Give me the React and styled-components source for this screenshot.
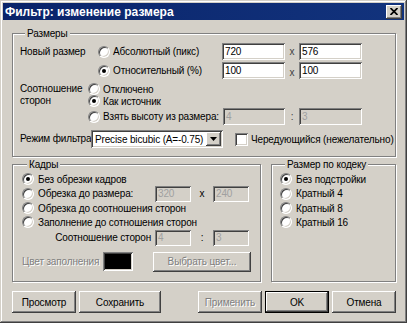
import styled, { createGlobalStyle, css } from 'styled-components';

const face = '#d4d0c8';

const GlobalStyle = createGlobalStyle`
  html, body { margin: 0; padding: 0; background: ${face}; }
  body {
    font-family: "Liberation Sans", Arial, sans-serif;
    font-size: 10px;
    letter-spacing: -0.15px;
    color: #000;
  }
  * { box-sizing: border-box; }
`;

const raised = css`
  background: ${face};
  box-shadow: inset -1px -1px #404040, inset 1px 1px #fff,
    inset -2px -2px #808080, inset 2px 2px ${face};
`;

const sunken = css`
  box-shadow: inset 1px 1px #808080, inset -1px -1px #fff,
    inset 2px 2px #404040, inset -2px -2px ${face};
`;

const disabledText = css`
  color: #808080;
  text-shadow: 1px 1px 0 #fff;
`;

const Window = styled.div`
  width: 407px;
  height: 323px;
  padding: 3px;
  background: ${face};
  box-shadow: inset -1px -1px #404040, inset 1px 1px ${face},
    inset -2px -2px #808080, inset 2px 2px #fff;
  display: flex;
  flex-direction: column;
`;

const TitleBar = styled.div`
  height: 17px;
  flex: none;
  display: flex;
  align-items: center;
  justify-content: space-between;
  padding: 0 2px 0 2px;
  background: linear-gradient(90deg, #0a246a, #12337d);
  color: #fff;
  font-weight: bold;
  font-size: 12px;
  letter-spacing: 0;
`;

const CloseButton = styled.div`
  ${raised};
  width: 16px;
  height: 14px;
  display: flex;
  align-items: center;
  justify-content: center;
`;

const Body = styled.div`
  padding: 7px 8px 0 9px;
  display: flex;
  flex-direction: column;
`;

const Group = styled.fieldset`
  margin: 0;
  padding: ${(p) => p.$pad};
  border: 1px solid #808080;
  box-shadow: inset 1px 1px #fff, 1px 1px #fff;
  min-width: 0;
  width: ${(p) => (p.$w ? `${p.$w}px` : 'auto')};
  display: flex;
  flex-direction: column;
`;

const Legend = styled.legend`
  padding: 0 2px;
  margin-left: 5px;
  line-height: 13px;
  background: ${face};
`;

const Section = styled.div`
  display: flex;
  margin-top: ${(p) => p.$mt || 0}px;
`;

const SideLabel = styled.div`
  width: ${(p) => p.$w}px;
  flex: none;
  line-height: ${(p) => p.$lh}px;
  white-space: nowrap;
`;

const Column = styled.div`
  display: flex;
  flex-direction: column;
`;

const Row = styled.div`
  display: flex;
  align-items: center;
  height: ${(p) => p.$h}px;
  margin-top: ${(p) => p.$mt || 0}px;
`;

const Option = styled.div`
  display: flex;
  align-items: center;
  gap: ${(p) => p.$gap || 3}px;
  width: ${(p) => (p.$w ? `${p.$w}px` : 'auto')};
  margin-left: ${(p) => p.$ml || 0}px;
  flex: none;
  white-space: nowrap;
`;

const RadioMark = styled.span`
  width: 12px;
  height: 12px;
  flex: none;
  border-radius: 50%;
  background: #fff;
  border: 1px solid;
  border-color: #808080 #fff #fff #808080;
  box-shadow: inset 1px 1px #404040, inset -1px -1px ${face};
  display: flex;
  align-items: center;
  justify-content: center;
  &::after {
    content: '';
    width: 4px;
    height: 4px;
    border-radius: 50%;
    background: ${(p) => (p.$checked ? '#000' : 'transparent')};
  }
`;

const CheckMark = styled.span`
  ${sunken};
  width: 13px;
  height: 13px;
  flex: none;
  background: #fff;
`;

const TextBox = styled.div`
  ${sunken};
  width: ${(p) => p.$w}px;
  height: ${(p) => p.$h || 17}px;
  flex: none;
  background: ${(p) => (p.$disabled ? face : '#fff')};
  color: ${(p) => (p.$disabled ? '#a0a0a0' : '#000')};
  padding: 0 3px;
  display: flex;
  align-items: center;
`;

const Sep = styled.div`
  width: ${(p) => p.$w}px;
  flex: none;
  text-align: center;
  color: ${(p) => (p.$disabled ? '#000' : '#404040')};
  padding-top: ${(p) => p.$pt || 0}px;
`;

const Select = styled.div`
  ${sunken};
  width: 132px;
  height: 18px;
  flex: none;
  background: #fff;
  padding: 2px;
  display: flex;
  align-items: center;
`;

const SelectText = styled.span`
  flex: 1;
  padding-left: 2px;
  white-space: nowrap;
`;

const DropButton = styled.div`
  ${raised};
  width: 15px;
  height: 14px;
  display: flex;
  align-items: center;
  justify-content: center;
`;

const Text = styled.span`
  white-space: nowrap;
  ${(p) => p.$disabled && disabledText};
`;

const RightLabel = styled.div`
  width: ${(p) => p.$w}px;
  flex: none;
  text-align: right;
  padding-right: 4px;
`;

const Swatch = styled.div`
  ${sunken};
  width: 30px;
  height: 19px;
  flex: none;
  background: #000;
  margin-right: 20px;
`;

const BottomRow = styled.div`
  display: flex;
  gap: 10px;
  margin-top: 1px;
`;

const ButtonBar = styled.div`
  display: flex;
  gap: 3px;
  margin-top: 9px;
`;

const Spacer = styled.div`
  flex: 1;
`;

const Button = styled.div`
  ${raised};
  width: ${(p) => p.$w}px;
  height: ${(p) => p.$h || 22}px;
  flex: none;
  display: flex;
  align-items: center;
  justify-content: center;
  white-space: nowrap;
  ${(p) => p.$disabled && disabledText};
  ${(p) =>
    p.$default &&
    css`
      border: 1px solid #000;
    `}
`;

function Radio({ checked, label, w, gap, disabled }) {
  return (
    <Option $w={w} $gap={gap}>
      <RadioMark $checked={checked} />
      <Text $disabled={disabled}>{label}</Text>
    </Option>
  );
}

export default function App() {
  return (
    <>
      <GlobalStyle />
      <Window>
        <TitleBar>
          <span>Фильтр: изменение размера</span>
          <CloseButton>
            <svg width="8" height="7" viewBox="0 0 8 7">
              <path d="M0.5 0 L7.5 7 M7.5 0 L0.5 7" stroke="#000" strokeWidth="1.7" />
            </svg>
          </CloseButton>
        </TitleBar>
        <Body>
          <Group $pad="2px 0 7px 7px">
            <Legend>Размеры</Legend>
            <Section>
              <SideLabel $w={78} $lh={19}>Новый размер</SideLabel>
              <Column>
                <Row $h={19}>
                  <Radio w={124} label="Абсолютный (пикс)" />
                  <TextBox $w={63}>720</TextBox>
                  <Sep $w={14}>x</Sep>
                  <TextBox $w={63}>576</TextBox>
                </Row>
                <Row $h={19}>
                  <Radio w={124} checked label="Относительный (%)" />
                  <TextBox $w={63}>100</TextBox>
                  <Sep $w={14} $pt={3}>x</Sep>
                  <TextBox $w={63}>100</TextBox>
                </Row>
              </Column>
            </Section>
            <Section $mt={3}>
              <SideLabel $w={68} $lh={12}>
                Соотношение
                <br />
                сторон
              </SideLabel>
              <Column>
                <Row $h={12}>
                  <Radio w={135} label="Отключено" />
                </Row>
                <Row $h={12}>
                  <Radio w={135} checked label="Как источник" />
                </Row>
                <Row $h={19}>
                  <Radio w={135} label="Взять высоту из размера:" />
                  <TextBox $w={62} $disabled>4</TextBox>
                  <Sep $w={14}>:</Sep>
                  <TextBox $w={63} $disabled>3</TextBox>
                </Row>
              </Column>
            </Section>
            <Row $h={20} $mt={3}>
              <SideLabel $w={71} $lh={20}>Режим фильтра</SideLabel>
              <Select>
                <SelectText>Precise bicubic (A=-0.75)</SelectText>
                <DropButton>
                  <svg width="7" height="4" viewBox="0 0 7 4">
                    <path d="M0 0 H7 L3.5 4 Z" fill="#000" />
                  </svg>
                </DropButton>
              </Select>
              <Option $gap={3} $ml={12}>
                <CheckMark />
                <Text>Чередующийся (нежелательно)</Text>
              </Option>
            </Row>
          </Group>

          <BottomRow>
            <Group $w={249} $pad="1px 0 9px 9px">
              <Legend>Кадры</Legend>
              <Row $h={14}>
                <Radio w={133} gap={4} checked label="Без обрезки кадров" />
              </Row>
              <Row $h={15}>
                <Radio w={133} gap={4} label="Обрезка до размера:" />
                <TextBox $w={36} $h={16} $disabled>320</TextBox>
                <Sep $w={22} $disabled>x</Sep>
                <TextBox $w={36} $h={16} $disabled>240</TextBox>
              </Row>
              <Row $h={14}>
                <Radio w={133} gap={4} label="Обрезка до соотношения сторон" />
              </Row>
              <Row $h={14}>
                <Radio w={133} gap={4} label="Заполнение до сотношения сторон" />
              </Row>
              <Row $h={17}>
                <RightLabel $w={133}>Соотношение сторон</RightLabel>
                <TextBox $w={36} $h={16} $disabled>4</TextBox>
                <Sep $w={22} $disabled>:</Sep>
                <TextBox $w={36} $h={16} $disabled>3</TextBox>
              </Row>
              <Row $h={21} $mt={5}>
                <SideLabel $w={81} $lh={21}>
                  <Text $disabled>Цвет заполнения</Text>
                </SideLabel>
                <Swatch />
                <Button $w={98} $h={20} $disabled>
                  Выбрать цвет...
                </Button>
              </Row>
            </Group>
            <Group $w={125} $pad="1px 0 9px 8px">
              <Legend>Размер по кодеку</Legend>
              <Row $h={14}>
                <Radio gap={4} checked label="Без подстройки" />
              </Row>
              <Row $h={15}>
                <Radio gap={4} label="Кратный 4" />
              </Row>
              <Row $h={14}>
                <Radio gap={4} label="Кратный 8" />
              </Row>
              <Row $h={14}>
                <Radio gap={4} label="Кратный 16" />
              </Row>
            </Group>
          </BottomRow>

          <ButtonBar>
            <Button $w={64}>Просмотр</Button>
            <Button $w={82}>Сохранить</Button>
            <Spacer />
            <Button $w={64} $disabled>
              Применить
            </Button>
            <Button $w={64} $default>
              OK
            </Button>
            <Button $w={64}>Отмена</Button>
          </ButtonBar>
        </Body>
      </Window>
    </>
  );
}
